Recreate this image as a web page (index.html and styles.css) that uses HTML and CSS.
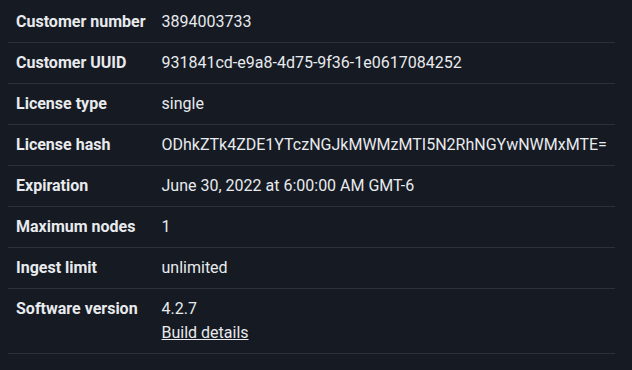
FILE: index.html
```html
<!DOCTYPE html>
<html lang="en">

<head>
    <meta charset="UTF-8">
    <title>License</title>
    <link rel="stylesheet" href="styles.css">
</head>

<body>
    <table class="license-table">
        <tbody>
            <tr>
                <th>Customer number</th>
                <td>3894003733</td>
            </tr>
            <tr>
                <th>Customer UUID</th>
                <td>931841cd-e9a8-4d75-9f36-1e0617084252</td>
            </tr>
            <tr>
                <th>License type</th>
                <td>single</td>
            </tr>
            <tr>
                <th>License hash</th>
                <td>ODhkZTk4ZDE1YTczNGJkMWMzMTI5N2RhNGYwNWMxMTE=</td>
            </tr>
            <tr>
                <th>Expiration</th>
                <td>June 30, 2022 at 6:00:00 AM GMT-6</td>
            </tr>
            <tr>
                <th>Maximum nodes</th>
                <td>1</td>
            </tr>
            <tr>
                <th>Ingest limit</th>
                <td>unlimited</td>
            </tr>
            <tr>
                <th>Software version</th>
                <td>4.2.7<br><a href="#">Build details</a></td>
            </tr>
        </tbody>
    </table>
</body>

</html>
```

FILE: styles.css
```css
body {
    margin: 0;
    padding: 2px 8px 0;
    background-color: #151a23;
    color: #e8eaed;
    font-family: Roboto, "Liberation Sans", sans-serif;
    font-size: 16px;
    line-height: 24px;
}

.license-table {
    border-collapse: collapse;
}

.license-table th,
.license-table td {
    padding: 8px;
    text-align: left;
    vertical-align: top;
    border-bottom: 1px solid #2b313b;
}

.license-table th {
    font-weight: 700;
    white-space: nowrap;
}

.license-table a {
    color: inherit;
}
```
